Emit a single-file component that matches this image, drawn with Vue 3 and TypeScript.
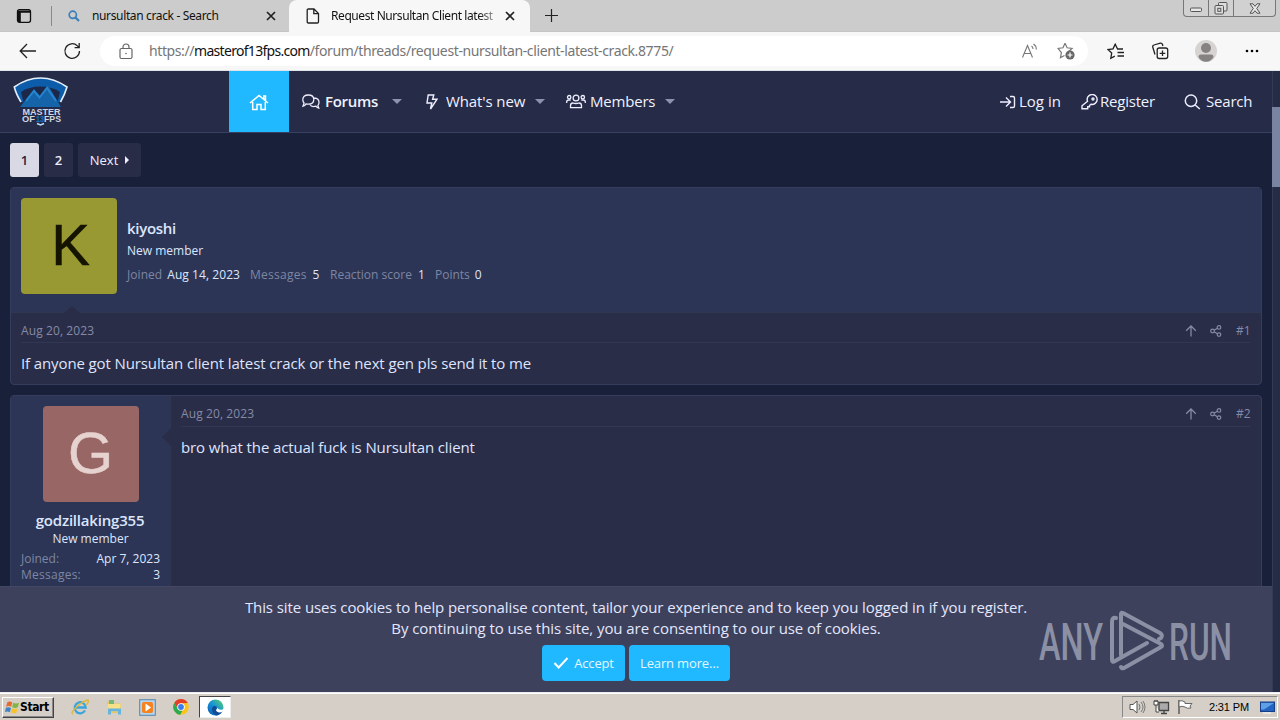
<script setup lang="ts">
interface Stat {
  label: string
  value: string
  cls: string
}

const stats: Stat[] = [
  { label: 'Joined', value: 'Aug 14, 2023', cls: 'joined' },
  { label: 'Messages', value: '5', cls: 'messages' },
  { label: 'Reaction score', value: '1', cls: 'reaction' },
  { label: 'Points', value: '0', cls: 'points' },
]
</script>

<template>
  <div class="screen">
    <header class="tabs">
      <svg class="tab-actions" width="16" height="16" viewBox="0 0 16 16"><rect x="1.500" y="1.700" width="13" height="12.600" rx="2" fill="none" stroke="#111" stroke-width="1.300"/><path d="M2 2.500h12v2.200H2zM2 4.500h2.800v9.500H2z" fill="#111"/></svg>
      <i class="tab-divider"></i>
      <svg class="tab-search" width="12" height="12" viewBox="0 0 12 12" fill="none" stroke="#3c7fb8"><circle cx="4.800" cy="4.800" r="3.600" stroke-width="1.700"/><path d="m7.500 7.500 3.500 3.500" stroke-width="2.200"/></svg>
      <span class="tab-title one">nursultan crack - Search</span>
      <svg class="close c1" width="10" height="10" viewBox="0 0 10 10"><path d="m1 1 8 8M9 1 1 9" stroke="#222" stroke-width="1.700"/></svg>
      <div class="tab-active">
        <svg width="14" height="16" viewBox="0 0 14 16" fill="none" stroke="#222" stroke-width="1.300"><path d="M1.200 2.200Q1.200 1 2.400 1H8l4.500 4.500v8.300q0 1.200-1.200 1.200H2.400q-1.200 0-1.200-1.200zM7.800 1v4.700h4.700"/></svg>
        <span class="tab-title two">Request Nursultan Client latest</span>
        <svg class="close" width="10" height="10" viewBox="0 0 10 10"><path d="m1 1 8 8M9 1 1 9" stroke="#222" stroke-width="1.700"/></svg>
      </div>
      <svg class="plus" width="16" height="16" viewBox="0 0 16 16"><path d="M1 7.500h13M7.500 1v13" stroke="#222" stroke-width="1.200"/></svg>
      <div class="window-controls">
        <span class="wc min"><svg width="14" height="6" viewBox="0 0 14 6"><rect x="1.500" y="1" width="11" height="3.500" rx="1" fill="#e8e8e8" stroke="#555"/></svg></span>
        <span class="wc max"><svg width="14" height="13" viewBox="0 0 14 13" fill="#ddd" stroke="#555"><rect x="4.500" y=".5" width="8.500" height="8.500" rx="1"/><rect x="1" y="3.500" width="8.500" height="8.500" rx="1"/><rect x="3.800" y="6.300" width="3" height="3"/></svg></span>
        <span class="wc x"><svg width="12" height="11" viewBox="0 0 12 11"><path d="M1 .8h3L6 3.300 8 .8h3L7.700 5.500 11 10.200H8L6 7.700 4 10.200H1l3.300-4.700z" fill="#e8e8e8" stroke="#555"/></svg></span>
      </div>
    </header>

    <div class="toolbar">
      <svg class="back" width="18" height="16" viewBox="0 0 18 16" fill="none" stroke="#222" stroke-width="1.300"><path d="M17 8H1.500M8 1 1.200 8 8 15"/></svg>
      <svg class="reload" width="18" height="18" viewBox="0 0 18 18" fill="none" stroke="#222" stroke-width="1.300"><path d="M16.500 9A7.300 7.300 0 1 1 14.400 3.900L16 5.500M16.200 1v4.600h-4.600"/></svg>
      <div class="address">
        <svg class="lock" width="14" height="17" viewBox="0 0 14 17" fill="none" stroke="#666" stroke-width="1.200"><rect x="1" y="5.500" width="12" height="10" rx="1.500"/><path d="M4 5.500V4a3 3 0 0 1 6 0v1.500"/><circle cx="7" cy="10.500" r=".8" fill="#666" stroke="none"/></svg>
        <span class="url"><span class="scheme">https://</span><span class="host">masterof13fps.com</span><span class="path">/forum/threads/request-nursultan-client-latest-crack.8775/</span></span>
        <svg class="read" width="17" height="16" viewBox="0 0 17 16" fill="none" stroke="#777" stroke-width="1.100"><path d="m1.500 14.500 5-12 5 12M3.200 10.500h6.700M10.500 3q1.500 1 1.500 3M12.500 1q3 2 2.800 5.500"/></svg>
        <svg class="fav" width="18" height="18" viewBox="0 0 18 18"><path d="m8 1.300 2.100 4.500 5 .6-3.700 3.400M7.500 13.400l-4 2.300.9-5L1 6.400l5-.6L8 1.300" fill="none" stroke="#777" stroke-width="1.200"/><circle cx="13" cy="13" r="4.600" fill="#666"/><path d="M13 10.500v5M10.500 13h5" stroke="#fff" stroke-width="1.200"/></svg>
      </div>
      <svg class="favlist" width="18" height="17" viewBox="0 0 18 17" fill="none" stroke="#222" stroke-width="1.300"><path d="M16 6h-5.400L8.200 1.200 6 5.800 1 6.500l3.700 3.600-.9 5.200 4-2.200M10.500 9.500H17M10.500 13H17"/></svg>
      <svg class="collections" width="18" height="18" viewBox="0 0 18 18" fill="none" stroke="#222" stroke-width="1.300"><rect x="6.200" y="6" width="10.500" height="10.500" rx="2"/><path d="M11.500 8.500v5.500M8.700 11.300h5.600M4 12.500 1.800 5.300Q1.300 3.500 3 3l6.300-1.800q1.600-.3 2.200 1.300l.4 1.500"/></svg>
      <svg class="profile" width="22" height="22" viewBox="0 0 22 22"><circle cx="11" cy="11" r="11" fill="#d6d3d1"/><circle cx="11" cy="8" r="5" fill="#858281"/><path d="M3.500 17Q3.500 14.500 6 14.500h10q2.500 0 2.500 2.500-2.500 4.800-7.500 4.800T3.500 17" fill="#858281"/></svg>
      <svg class="more" width="14" height="4" viewBox="0 0 14 4"><circle cx="2" cy="2" r="1.300"/><circle cx="7" cy="2" r="1.300"/><circle cx="12" cy="2" r="1.300"/></svg>
    </div>

    <main class="page">
      <div class="content">
        <nav class="nav">
          <svg class="logo" width="56" height="50" viewBox="0 0 56 50">
            <path d="M1 11Q14 1 27.500 1T55 11q-3 9-6.500 15l-4 20H34l-6.500 3-6.500-3H11L7.500 26Q3 18 1 11z" fill="#222b49"/>
            <path d="M8 26Q3 18 1.300 11 14 2 27.500 2T54 11q-2 7-6.500 15" fill="#0c5ca9" stroke="#e5effa" stroke-width="1.600"/>
            <path d="M11 28 8 16Q16 10.500 27.500 10.500T47 16L44 28z" fill="#1d2849"/>
            <path d="m7 31 14-18 6 7 8-11 13 22z" fill="#1563a8"/><path d="m13 25 8-10 5.500 6.500L34 12l9 13" fill="none" stroke="#2485cf" stroke-width="2"/>
            <text x="9.500" y="38.500" textLength="38" lengthAdjust="spacingAndGlyphs">MASTER</text>
            <text x="9" y="46" textLength="13" lengthAdjust="spacingAndGlyphs">OF</text>
            <text x="23" y="46" class="logo-13" textLength="8" lengthAdjust="spacingAndGlyphs">13</text>
            <text x="31" y="46" textLength="17" lengthAdjust="spacingAndGlyphs">FPS</text>
            <path d="m24 47.500 3.500 1.500 3.500-1.500" fill="none" stroke="#b9dcfa" stroke-width="1.500"/>
          </svg>
          <a class="home"><svg width="20" height="17" viewBox="0 0 20 17" fill="none" stroke="#fff" stroke-width="1.500"><path d="M1 9 10 1.500 19 9M14.800 5V2h1.700v4.500M3.700 8v7.500H8v-5h4v5h4.300V8"/></svg></a>
          <a class="item forums"><svg width="18" height="15" viewBox="0 0 18 15" fill="none" stroke="#eef" stroke-width="1.300"><path d="M1 12.200 2.100 9Q.8 7.800.8 5.800.8 1 6.300 1t5.500 4.600-5.500 4.600q-1.200 0-2.200-.4-1.300 1.900-3.100 2.400zM12.300 4q4.700.4 4.700 4.400 0 1.700-1.100 3l.9 2.800q-1.700-.3-2.900-2-4.600 1.200-6.100-1.900"/></svg><span>Forums</span><i class="caret"></i></a>
          <a class="item news"><svg width="13" height="16" viewBox="0 0 13 16" fill="none" stroke="#eef" stroke-width="1.400"><path d="M3.200 1h5.600L7.600 5.300h4.300L5.500 15l1.300-6H2z"/></svg><span>What's new</span><i class="caret"></i></a>
          <a class="item members"><svg width="20" height="15" viewBox="0 0 20 15" fill="none" stroke="#eef" stroke-width="1.300"><circle cx="10" cy="4" r="2.900"/><circle cx="3.200" cy="3.200" r="1.700"/><circle cx="16.800" cy="3.200" r="1.700"/><path d="M4.500 13.700v-2Q4.500 9 7 9q3 1 6 0 2.500 0 2.500 2.700v2zM.7 9V8q0-2 2-2h2M19.300 9V8q0-2-2-2h-2"/></svg><span>Members</span><i class="caret"></i></a>
          <div class="account">
            <a class="item login"><svg width="16" height="14" viewBox="0 0 16 14" fill="none" stroke="#eef" stroke-width="1.400"><path d="M0 7h10M6 2.500 10.500 7 6 11.500M10 1.500h3q1.500 0 1.500 1.500v8q0 1.500-1.500 1.500h-3"/></svg><span>Log in</span></a>
            <a class="item register"><svg width="17" height="16" viewBox="0 0 17 16" fill="none" stroke="#eef" stroke-width="1.400"><path d="M6.500 7.200A5 5 0 1 1 10 10.300L8.500 11.500v1.300H6.700v2H1v-3z"/><circle cx="12" cy="5" r="1"/></svg><span>Register</span></a>
            <a class="item search"><svg width="17" height="16" viewBox="0 0 17 16" fill="none" stroke="#eef" stroke-width="1.500"><circle cx="7" cy="6.800" r="5.700"/><path d="m11.200 11 4.600 4"/></svg><span>Search</span></a>
          </div>
        </nav>

        <div class="pager"><a class="current">1</a><a>2</a><a class="next"><span>Next</span><i></i></a></div>

        <article class="post first">
          <section class="author-row">
            <div class="avatar k">K</div>
            <div class="author">
              <div class="name">kiyoshi</div>
              <div class="role">New member</div>
              <div class="stats"><span v-for="s in stats" :key="s.label" class="stat" :class="s.cls"><span class="dim">{{ s.label }}</span><span>{{ s.value }}</span></span></div>
            </div>
            <i class="notch-up"></i>
          </section>
          <section class="body">
            <div class="meta"><span class="date">Aug 20, 2023</span>
              <svg class="up" width="12" height="12" viewBox="0 0 12 12" fill="none" stroke="currentColor" stroke-width="1.300"><path d="M6 11.500V1M1.200 5.800 6 1l4.800 4.800"/></svg>
              <svg class="share" width="12" height="12" viewBox="0 0 12 12" fill="none" stroke="currentColor" stroke-width="1.200"><circle cx="2.500" cy="6" r="1.800"/><circle cx="9" cy="2.400" r="1.800"/><circle cx="9" cy="9.600" r="1.800"/><path d="m4.100 5.200 3.300-1.900M4.100 6.800l3.300 1.900"/></svg>
              <span class="num">#1</span></div>
            <p class="m1">If anyone got Nursultan client latest crack or the next gen pls send it to me</p>
          </section>
        </article>

        <article class="post second">
          <section class="author-col">
            <div class="avatar g">G</div>
            <div class="name">godzillaking355</div>
            <div class="role">New member</div>
            <div class="pair"><span class="dim">Joined:</span><span>Apr 7, 2023</span></div>
            <div class="pair"><span class="dim messages-label">Messages:</span><span>3</span></div>
            <i class="notch-left"></i>
          </section>
          <section class="body">
            <div class="meta"><span class="date">Aug 20, 2023</span>
              <svg class="up" width="12" height="12" viewBox="0 0 12 12" fill="none" stroke="currentColor" stroke-width="1.300"><path d="M6 11.500V1M1.200 5.800 6 1l4.800 4.800"/></svg>
              <svg class="share" width="12" height="12" viewBox="0 0 12 12" fill="none" stroke="currentColor" stroke-width="1.200"><circle cx="2.500" cy="6" r="1.800"/><circle cx="9" cy="2.400" r="1.800"/><circle cx="9" cy="9.600" r="1.800"/><path d="m4.100 5.200 3.300-1.900M4.100 6.800l3.300 1.900"/></svg>
              <span class="num">#2</span></div>
            <p class="m2">bro what the actual fuck is Nursultan client</p>
          </section>
        </article>

        <aside class="cookies">
          <p class="ck1">This site uses cookies to help personalise content, tailor your experience and to keep you logged in if you register.</p>
          <p class="ck2">By continuing to use this site, you are consenting to our use of cookies.</p>
          <div class="buttons">
            <button class="accept"><svg width="16" height="14" viewBox="0 0 16 14"><path d="m1.500 7 4.200 4.500L14.500 2" fill="none" stroke="#fff" stroke-width="2"/></svg><span>Accept</span></button>
            <button class="learn"><span>Learn more…</span></button>
          </div>
        </aside>
      </div>
      <div class="scrollbar"><i></i></div>

      <svg class="watermark" width="200" height="80" viewBox="0 0 200 80">
        <text x="2" y="51.500" textLength="64" lengthAdjust="spacingAndGlyphs">ANY</text>
        <text x="132" y="51.500" textLength="63" lengthAdjust="spacingAndGlyphs">RUN</text>
        <g fill="none" stroke="#8b90a5" stroke-width="4" stroke-linejoin="round" stroke-linecap="round">
          <path d="M84 47V6q0-2 2-1l37 20q3 2 1 5l-2 1"/>
          <path d="m86 16 38 20q2 2 0 3L87 60q-2 1-3-1"/>
          <path d="M79 10q-4-1-4 4v38q0 3 3 1l32-18"/>
        </g>
      </svg>
    </main>

    <footer class="taskbar">
      <div class="start"><svg width="15" height="15" viewBox="0 0 15 15"><path d="M2.500 2Q5 .8 7.200 2.300L6.200 6.700Q4 5.500 1 6.700z" fill="#e76a32"/><path d="M8.200 2.700q2.500 1.400 5.800.1l-1.200 4.500q-2.800 1.200-5.600-.1z" fill="#83b545"/><path d="M.9 7.800Q3.600 6.700 6 8l-1.200 4.300Q2.500 11 0 12z" fill="#3c83c8"/><path d="M7 8.300q2.700 1.200 5.500.2l-1.200 4.400q-2.800 1-5.500-.3z" fill="#f4c32e"/></svg><span>Start</span></div>
      <svg class="ie" width="18" height="18" viewBox="0 0 18 18" fill="none"><path d="M14 12.500A5.500 5.500 0 1 1 14.700 9.500H5" stroke="#38a5dc" stroke-width="2.300"/><path d="M2 16q-3-1 3.500-7T17 2q1.500 2-2 5" stroke="#dfb83e" stroke-width="1.400"/></svg>
      <svg class="explorer" width="18" height="17" viewBox="0 0 18 17"><path d="M2 2.500h5l1 2h8v9H2z" fill="#e5c763"/><path d="M4 1h5v4H4z" fill="#77b874"/><path d="M2.500 5h13v8h-13z" fill="#f7e08a"/><path d="M3 9.500h13v6h-3v-3H6v3H3z" fill="#67b4dc"/><path d="M6 12.500h7v1.500H6z" fill="#e5c763"/></svg>
      <svg class="player" width="17" height="17" viewBox="0 0 17 17"><rect x=".7" y=".7" width="15.600" height="15.600" fill="#b8d2e8" stroke="#5385b2"/><rect x="3" y="3" width="11" height="11" rx="2" fill="#f58220"/><path d="m6.500 4.500 5.500 4-5.500 4z" fill="#fff"/></svg>
      <svg class="chrome" width="16" height="16" viewBox="0 0 16 16"><circle cx="8" cy="8" r="7.800" fill="#fbc31b"/><path d="M1.200 4.100A7.800 7.800 0 0 1 14.800 4L8 4.200 5 10z" fill="#e43e2b"/><path d="M1.200 4.100 5 10l4.500 1.500-2.300 4.300A7.800 7.800 0 0 1 1.200 4.100z" fill="#2da94f"/><circle cx="8" cy="8" r="3.800" fill="#fff"/><circle cx="8" cy="8" r="2.900" fill="#3b7ded"/></svg>
      <div class="running"><svg width="17" height="17" viewBox="0 0 17 17"><defs><linearGradient id="edgeSwirl" x1="0" y1="1" x2="1" y2="0"><stop stop-color="#0c55ad"/><stop offset=".5" stop-color="#1595d8"/><stop offset="1" stop-color="#62d362"/></linearGradient></defs><circle cx="8.500" cy="8.500" r="8" fill="url(#edgeSwirl)"/><path d="M8 7q2 0 2 2t-1 2q1 2 4 1.600 1.500 0 2.300-.4Q13 16.300 9 16.400 5 14.500 5 10.500T8 7" fill="#124b98"/><path d="M9.200 7.500q2 1.500-.2 3.600.5 2.400 4 2.300 2 0 4-1.700V10q-3 1.500-5.500 0-1.500-1.500-2.300-2.500" fill="#fff"/></svg></div>
      <div class="tray">
        <svg class="sound" width="17" height="16" viewBox="0 0 17 16"><path d="M1 5.500h3L8 2v12l-4-3.500H1z" fill="#fff" stroke="#555"/><path d="M10 5q2 3 0 6M12 3q4 5 0 10M14 2q4 6 0 12" fill="none" stroke="#777"/></svg>
        <svg class="net" width="17" height="16" viewBox="0 0 17 16"><path d="M6 3.500h9.500v8H6zM8 14.500h6M11 12v2" fill="#aaa" stroke="#444" stroke-width="1.300"/><path d="M1 2h4v4H1zM2 1v2M4 1v2M3 6v7h3" fill="#fff" stroke="#444"/></svg>
        <svg class="flag" width="17" height="16" viewBox="0 0 17 16"><path d="M2 15V1" stroke="#555" stroke-width="1.400"/><path d="M2 2q3-1 6 1v1.500h7L13 7l1 2q-4 1-6-1-3-1.500-6 0z" fill="#fff" stroke="#666"/></svg>
        <span class="clock">2:31 PM</span>
        <svg class="desktop" width="15" height="13" viewBox="0 0 15 13"><rect x=".5" y="1" width="14" height="9.500" fill="#2464c1" stroke="#183f85"/><path d="M1 2h13L4 8.500H1z" fill="#5da0e8"/><path d="M3 12h8" stroke="#eee" stroke-width="1.500"/></svg>
      </div>
    </footer>
  </div>
</template>

<style>
html, body { margin: 0; overflow: hidden; }
</style>

<style scoped>
* { box-sizing: border-box; }
.screen { width: 1280px; height: 720px; display: flex; flex-direction: column; overflow: hidden; font-family: "Open Sans", "Noto Sans", sans-serif; white-space: nowrap; }
svg { display: block; flex: none; }
p { margin: 0; }
.tabs { height: 32px; flex: none; background: #ccc; display: flex; align-items: center; border-bottom: 1px solid #c5c5c5; }
.tab-actions { margin-left: 16px; }
.tab-divider { width: 1px; height: 20px; background: #888; margin-left: 19px; }
.tab-search { margin-left: 16px; }
.tab-title { font: 12px/16px "Noto Sans", sans-serif; color: #111; flex: none; }
.tab-title.one { width: 130px; margin-left: 12px; letter-spacing: -.36px; }
.close.c1 { margin-left: 44px; }
.tab-active { align-self: stretch; width: 241px; margin-left: 13px; background: #f7f7f7; border-radius: 8px 8px 0 0; display: flex; align-items: center; padding-left: 17px; margin-bottom: -1px; }
.tab-title.two { width: 164px; margin: 0 10px 0 11px; letter-spacing: -.42px; background: linear-gradient(90deg, #111 90%, #aaa); background-clip: text; color: transparent; }
.plus { margin-left: 14px; }
.window-controls { align-self: flex-start; width: 93px; height: 17px; margin: 0 4px 0 auto; border: 1px solid #777; border-top: 0; border-radius: 0 0 4px 4px; display: flex; background: #d1d1d1; }
.wc { display: flex; align-items: center; justify-content: center; width: 25px; border-right: 1px solid #777; }
.wc.min { padding-top: 3px; }
.wc.x { flex: 1; border: 0; }
.toolbar { height: 39px; flex: none; background: #f7f7f7; display: flex; align-items: center; border-bottom: 1px solid #dfe3ea; }
.back { margin-left: 19px; }
.reload { margin-left: 26px; }
.address { width: 988px; height: 30px; border-radius: 15px; background: #fff; margin-left: 19px; display: flex; align-items: center; }
.lock { margin-left: 19px; }
.url { margin-left: 16px; width: 872px; font: 14px/20px "Noto Sans", sans-serif; color: #767676; }
.scheme { letter-spacing: -.4px; }
.path { letter-spacing: -.38px; }
.host { color: #111; letter-spacing: -.7px; }
.fav { margin-left: 19px; }
.favlist { margin-left: 19px; }
.collections { margin-left: 26px; }
.profile { margin-left: 26px; }
.more { margin-left: 28px; }
.page { height: 621px; flex: none; display: flex; position: relative; background: #18203a; }
.content { width: 1272px; height: 621px; overflow: hidden; position: relative; }
.nav { height: 62px; background: #262b48; border-bottom: 1px solid #3a405f; display: flex; color: #f0f2ff; }
.logo { margin: 5px 0 0 13px; }
.logo text { font: bold 8.500px "Liberation Sans", sans-serif; fill: #d1d6e2; }
.logo .logo-13 { fill: #1974b4; }
.home { width: 60px; height: 61px; background: #20b8ff; margin-left: 160px; display: flex; align-items: center; justify-content: center; padding-top: 2px; }
.item { display: flex; align-items: center; font-size: 15px; line-height: 22px; }
.item span { flex: none; margin-bottom: 2px; }
.caret { width: 0; height: 0; border: 5px solid transparent; border-top-color: #8d92ae; border-bottom: 0; }
.forums { margin-left: 13px; font-weight: 600; }
.forums span { margin-left: 5px; width: 67px; letter-spacing: -.3px; }
.news { margin-left: 23px; }
.news span { margin-left: 8px; width: 89px; letter-spacing: -.1px; }
.members { margin-left: 21px; }
.members span { margin-left: 4px; width: 75px; letter-spacing: -.2px; }
.account { margin-left: auto; margin-right: 19px; display: flex; }
.login span { margin-left: 3px; width: 42px; }
.register { margin-left: 20px; }
.register span { margin-left: 2px; width: 55px; letter-spacing: -.22px; }
.search { margin-left: 29px; }
.search span { margin-left: 5px; width: 47px; letter-spacing: -.2px; }
.pager { display: flex; gap: 5px; margin: 10px 0 0 10px; height: 34px; font-size: 13px; color: #eef; }
.pager a { width: 29px; border-radius: 3px; background: #282c47; display: flex; align-items: center; justify-content: center; font-weight: 600; }
.pager .current { background: #d8d9e5; color: #22263e; }
.pager .next { width: 63px; font-weight: 400; gap: 7px; }
.next i { border: 4px solid transparent; border-left-color: #eef; border-right: 0; }
.post { margin-left: 10px; width: 1252px; border: 1px solid #363d5c; border-radius: 4px; background: #292d48; overflow: hidden; }
.first { margin-top: 10px; height: 198px; }
.author-row { height: 125px; background: #2c3555; border-bottom: 1px solid #30384f; padding: 10px; display: flex; position: relative; }
.notch-up { position: absolute; left: 53px; bottom: -1px; border: 8px solid transparent; border-top: 0; border-bottom: 7px solid #292d48; }
.avatar { width: 96px; height: 96px; border-radius: 4px; display: flex; align-items: center; justify-content: center; font: 58px/94px "Liberation Sans", sans-serif; flex: none; padding-bottom: 2px; }
.k { background: #993; color: #141400; padding-left: 3px; -webkit-text-stroke: .5px #141400; }
.g { background: #966; color: #e6d2ce; margin: 0 auto; -webkit-text-stroke: .5px #e6d2ce; }
.author { margin-left: 10px; padding-top: 19px; color: #dce6ff; }
.name { font-size: 15px; line-height: 22px; font-weight: 600; color: #dce6ff; letter-spacing: -.2px; }
.author .name { letter-spacing: -.3px; }
.role { font-size: 12px; line-height: 16px; color: #dce6ff; }
.author .role { margin-top: 4px; }
.stats { display: flex; font-size: 12px; line-height: 18px; margin-top: 7px; }
.stat { display: flex; }
.dim { color: #7e86a3; }
.stat .dim { margin-right: 6px; }
.stat.joined .dim, .stat.points .dim { margin-right: 5px; }
.joined { width: 123px; letter-spacing: .06px; }
.messages { width: 80px; }
.messages .dim, .messages-label { letter-spacing: .25px; }
.reaction { width: 105px; }
.body { padding: 0 11px 0 10px; flex: 1; }
.meta { height: 30px; padding-top: 5px; border-bottom: 1px solid #323753; display: flex; align-items: center; color: #868aa6; font-size: 12px; line-height: 16px; }
.first .meta { padding-top: 6px; }
.second .meta { height: 31px; padding-top: 6px; }
.date { margin-right: auto; letter-spacing: .1px; }
.share { margin-left: 13px; }
.num { width: 14px; margin-left: 14px; }
.body p { margin-top: 10px; font-size: 15px; line-height: 21px; color: #dfe4ff; letter-spacing: -.115px; }
.second { margin-top: 10px; height: 260px; display: flex; }
.author-col { width: 160px; background: #2c3555; border-right: 1px solid #303650; padding: 10px; position: relative; }
.author-col .name { margin-top: 7px; text-align: center; padding-right: 1px; }
.author-col .role { text-align: center; line-height: 14px; margin-top: 1px; }
.pair { display: flex; justify-content: space-between; font-size: 12px; line-height: 16px; color: #dce6ff; }
.pair:nth-of-type(4) { margin-top: 5px; }
.notch-left { position: absolute; right: -1px; top: 32px; border: 9px solid transparent; border-left: 0; border-right: 9px solid #292d48; }
.cookies { position: absolute; left: 0; top: 515px; width: 1272px; height: 106px; background: #3d415c; border-top: 1px solid #424762; text-align: center; padding-top: 10px; color: #e4e7ff; font-size: 15px; line-height: 21px; }
.ck1 { letter-spacing: -.087px; }
.ck2 { letter-spacing: -.07px; }
.buttons { display: flex; justify-content: center; gap: 4px; margin-top: 6px; }
.buttons button { height: 36px; background: #20b8ff; border: 0; border-radius: 4px; color: #e4f7ff; font: 13px/20px "Open Sans", sans-serif; letter-spacing: -.15px; display: flex; align-items: center; justify-content: center; padding: 0; }
.buttons .accept { width: 83px; gap: 5px; }
.buttons .learn { width: 101px; }
.scrollbar { width: 8px; height: 621px; background: #242c46; border-left: 1px solid #343b56; padding-top: 36px; }
.scrollbar i { display: block; width: 8px; height: 80px; background: #7983a2; margin-left: -1px; }
.watermark { position: absolute; left: 1037px; top: 537px; overflow: visible; }
.watermark text { font: 500 51px Roboto, sans-serif; fill: #8b90a5; }
.taskbar { height: 28px; flex: none; background: #d5cfc7; border-top: 1px solid #eee; box-shadow: inset 0 1px #fff; display: flex; align-items: center; }
.start { width: 52px; height: 21px; margin: 1px 0 0 2px; display: flex; align-items: center; padding-left: 2px; font: bold 12px "DejaVu Sans Condensed", sans-serif; border: 1px solid #fff; border-right-color: #444; border-bottom-color: #444; box-shadow: inset -1px -1px #888; background: #d5cfc7; color: #000; letter-spacing: -.4px; }
.taskbar > svg { margin-top: 1px; }
.ie { margin-left: 17px; }
.explorer { margin-left: 16px; }
.player { margin-left: 16px; }
.chrome { margin-left: 17px; }
.running { width: 32px; height: 22px; margin: 1px 0 0 10px; background: #fff; border: 1px solid #444; border-right-color: #eee; border-bottom-color: #eee; display: flex; align-items: center; justify-content: center; }
.tray { width: 156px; height: 22px; margin: 1px 2px 0 auto; border: 1px solid #888; border-right-color: #fff; border-bottom-color: #fff; display: flex; align-items: center; padding-left: 6px; }
.net { margin-left: 7px; }
.flag { margin-left: 7px; }
.clock { font: 11px/16px "Liberation Sans", sans-serif; color: #000; width: 41px; margin-left: 15px; letter-spacing: -.15px; }
.desktop { margin-left: 10px; }
</style>
